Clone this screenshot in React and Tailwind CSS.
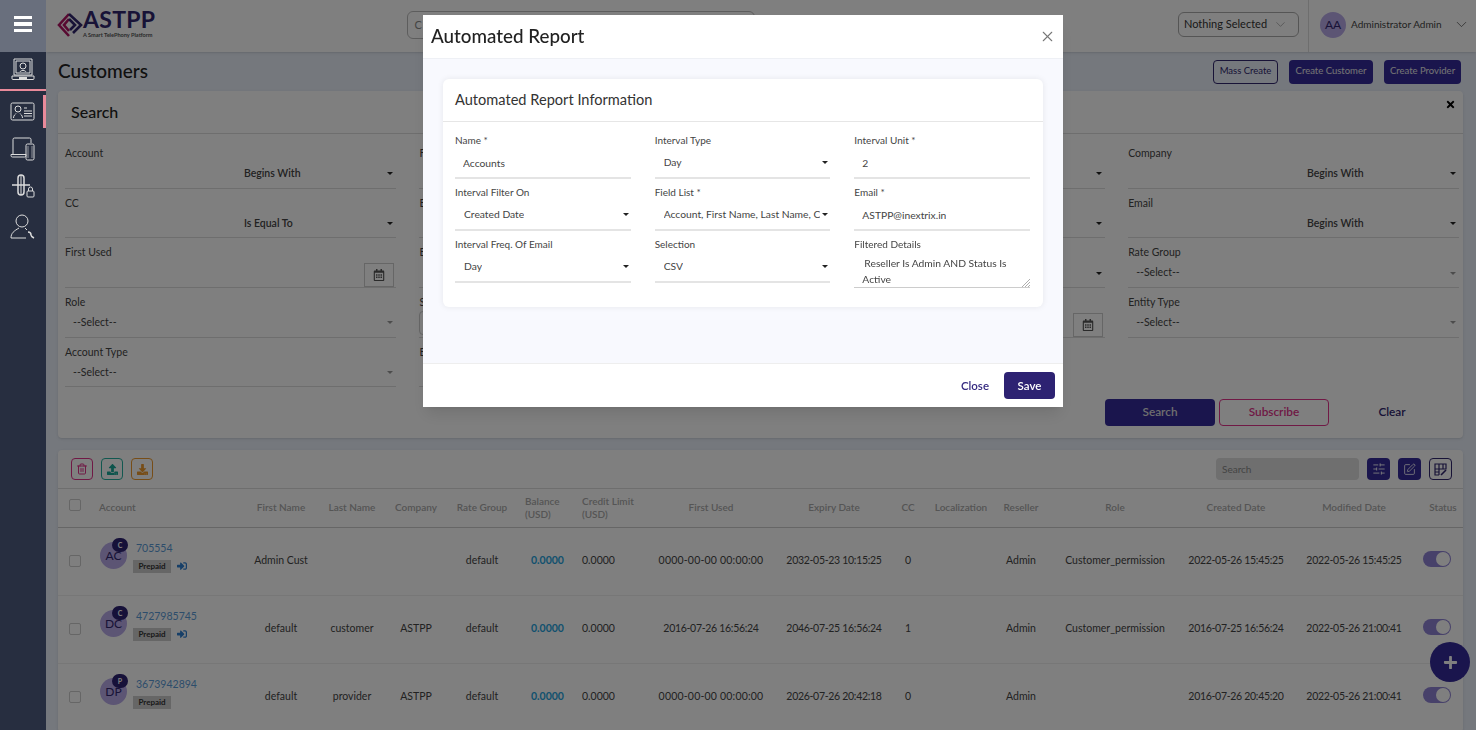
import { ChevronDown, SlidersHorizontal, SquarePen, Trash2, X } from "lucide-react";
import { FaDownload, FaPlus, FaRegCalendarAlt, FaSignInAlt, FaTimes, FaUpload } from "react-icons/fa";

const Caret = ({ light = false }) => (
  <span
    className={`ml-auto h-0 w-0 shrink-0 border-x-[3px] border-t-[3px] border-x-transparent ${
      light ? "border-t-[#999]" : "border-t-[#222]"
    }`}
  />
);

const SideIcon = ({ children }) => (
  <svg width="28" height="28" viewBox="0 0 28 28" fill="none" stroke="#dcdcdc" strokeWidth="1">
    {children}
  </svg>
);

const Sidebar = () => (
  <aside className="relative z-30 flex h-full w-[46px] shrink-0 flex-col items-center bg-[#272e40]">
    <div className="flex h-[52px] w-full flex-col items-center justify-center gap-[3px] bg-[#696f7d] pb-[4px]">
      <span className="h-[3.500px] w-[18px] bg-white" />
      <span className="h-[3.500px] w-[18px] bg-white" />
      <span className="h-[3.500px] w-[18px] bg-white" />
    </div>
    <div className="flex h-[37px] w-full items-center justify-center pb-[2px]">
      <SideIcon>
        <path d="M5 3h18v16H5z" />
        <path d="M7 5h14v12H7z" />
        <circle cx="14" cy="10" r="3" />
        <path d="M11 16c.5-2 5.500-2 6 0" />
        <path d="M3 20h22v2.500a1 1 0 0 1-1 1H4a1 1 0 0 1-1-1z" />
        <path d="M10 22h8" strokeWidth="2" />
      </SideIcon>
    </div>
    <div className="h-[2px] w-full bg-[#e98a9a]" />
    <div className="relative mt-[4px] flex h-[33px] w-full items-center justify-center">
      <SideIcon>
        <rect x="2" y="5" width="23" height="17" rx="1.500" />
        <circle cx="9" cy="11" r="3" />
        <path d="M4.500 20c0-3 2-3.500 2.500-4.500M13.500 20c0-3-2-3.500-2.500-4.500" />
        <path d="M15 10h3M15 13h8M15 15.500h8M15 18h8" />
      </SideIcon>
      <div className="absolute right-0 top-0 h-full w-[3px] bg-[#e98a9a]" />
    </div>
    <div className="mt-[3px] flex h-[36px] w-full items-center justify-center">
      <SideIcon>
        <path d="M4 19V4.500A1.500 1.500 0 0 1 5.500 3h15A1.500 1.500 0 0 1 22 4.500V8" />
        <path d="M2 19.500h15v1a1.500 1.500 0 0 1-1.500 1.500h-12A1.500 1.500 0 0 1 2 20.500z" />
        <rect x="17" y="9" width="8" height="16" rx="1.500" />
        <path d="M19 11v12M23 11v12" strokeWidth="0.600" />
      </SideIcon>
    </div>
    <div className="flex h-[37px] w-full items-center justify-center">
      <SideIcon>
        <rect x="9" y="3" width="6" height="20" rx="3" strokeWidth="1.500" />
        <path d="M3 13h18" strokeWidth="1.500" />
        <path d="M12 3v20" />
        <rect x="18" y="19" width="7" height="6" rx="1" />
        <path d="M19.500 19v-2a2 2 0 0 1 4 0v2" />
      </SideIcon>
    </div>
    <div className="mt-[2px] flex h-[41px] w-full items-center justify-center">
      <SideIcon>
        <circle cx="13" cy="8" r="6" />
        <path d="M2 25c0-5 3-7 8-10M2 25h15M16 15l2 2" />
        <path d="M19 19a3 3 0 0 1 3 3c0 1.500 2 2.500 3 3" strokeWidth="1.500" />
      </SideIcon>
    </div>
  </aside>
);

const Logo = () => (
  <div className="-mt-[1px] flex items-center">
    <svg width="26" height="26" viewBox="0 0 26 26" fill="none" strokeWidth="2.600">
      <path d="M12 2L2 13l10 11" stroke="#b01463" />
      <path d="M12 7l-5 6 5 6" stroke="#b01463" />
      <path d="M12 2l12 11-8 8" stroke="#30266e" />
      <path d="M12 7l6 6-5 5" stroke="#30266e" />
    </svg>
    <div className="-mt-[2px] flex flex-col">
      <span className="h-[20px] text-[23px] leading-[20px] font-bold tracking-[0.3px] text-[#30266e]">ASTPP</span>
      <span className="mt-[2px] h-[7px] text-[5.600px] leading-[7px] font-bold text-[#555]">A Smart TelePhony Platform</span>
    </div>
  </div>
);

const Header = () => (
  <header className="flex h-[52px] shrink-0 items-center bg-white pl-[11px] shadow-sm">
    <div className="flex h-full items-center pb-[2px]">
      <Logo />
      <div className="ml-[252px] flex h-[28px] w-[348px] items-center rounded-md border border-[#bbb] pl-[6px] text-[11px] text-[#888]">
        C
      </div>
    </div>
    <div className="ml-auto -mt-[3px] flex h-[25px] w-[121px] items-center rounded-md border border-[#aaa] pl-[5px] pr-[10px] text-[11px] text-[#333]">
      Nothing Selected
      <ChevronDown size={15} strokeWidth={1} className="ml-auto" color="#888" />
    </div>
    <div className="ml-[9px] flex h-full w-[168px] items-center border-l border-[#ddd] pb-[3px] pl-[11px]">
      <div className="flex h-[26px] w-[26px] items-center justify-center rounded-full bg-[#b8aae8] text-[12px] text-[#30266e]">
        AA
      </div>
      <span className="ml-[5px] text-[10px] text-[#444]">Administrator Admin</span>
      <ChevronDown size={17} strokeWidth={1} className="ml-auto mr-[6px]" color="#444" />
    </div>
  </header>
);

const TitleRow = () => (
  <div className="flex h-[39px] shrink-0 items-center pl-[12px] pr-[15px]">
    <h1 className="text-[19px] font-medium text-[#222]">Customers</h1>
    <div className="ml-auto flex gap-[11px] text-[9.500px]">
      <button className="h-[24px] w-[65px] rounded border border-[#30266e] text-[#30266e]">Mass Create</button>
      <button className="h-[24px] w-[84px] rounded bg-[#352a9a] text-[#e8e8e8]">Create Customer</button>
      <button className="h-[24px] w-[77px] rounded bg-[#352a9a] text-[#e8e8e8]">Create Provider</button>
    </div>
  </div>
);

const Field = ({ label, op, select, calendar, boxed }) => (
  <div className="h-[49.700px]">
    <div className="h-[14px] text-[10.500px] leading-[14px] text-[#444]">{label}</div>
    <div className="flex h-[28.500px] items-center border-b border-[#ddd] text-[10.500px] text-[#444]">
      {op && (
        <div className="ml-auto flex w-[161px] items-center pl-[9px] pr-[3px] font-semibold">
          {op}
          <Caret />
        </div>
      )}
      {select && (
        <div className="flex w-full items-center pl-[8px] pr-[3px]">
          {select}
          <Caret light />
        </div>
      )}
      {calendar && (
        <div className="ml-auto mr-[2px] flex h-[24px] w-[30px] items-center justify-center self-end border border-[#ccc] text-[#555]">
          <FaRegCalendarAlt size={12} />
        </div>
      )}
      {boxed && <div className="h-[24px] w-full rounded-sm border border-[#ccc]" />}
    </div>
  </div>
);

const searchFields = [
  { label: "Account", op: "Begins With" },
  { label: "First Name", op: "Begins With" },
  { label: "Last Name", op: "Begins With" },
  { label: "Company", op: "Begins With" },
  { label: "CC", op: "Is Equal To" },
  { label: "Balance", op: "Is Equal To" },
  { label: "Credit Limit", op: "Is Equal To" },
  { label: "Email", op: "Begins With" },
  { label: "First Used", calendar: true },
  { label: "Expiry Date", calendar: true },
  { label: "Reseller", op: "Begins With" },
  { label: "Rate Group", select: "--Select--" },
  { label: "Role", select: "--Select--" },
  { label: "Status", boxed: true },
  { label: "Created Date", calendar: true },
  { label: "Entity Type", select: "--Select--" },
  { label: "Account Type", select: "--Select--" },
  { label: "Entity", select: "--Select--" },
];

const SearchCard = () => (
  <section className="ml-[12px] mr-[13px] h-[347px] shrink-0 rounded-sm bg-white shadow-sm">
    <div className="flex h-[43px] items-center justify-between border-b border-[#ddd] pl-[13px] pr-[7px]">
      <h2 className="text-[16px] font-medium text-[#222]">Search</h2>
      <FaTimes size={11} color="#000" className="mb-[15px]" />
    </div>
    <div className="grid grid-cols-4 gap-x-[23.500px] pl-[7px] pr-[4px] pt-[12px]">
      {searchFields.map((f) => (
        <Field key={f.label} {...f} />
      ))}
    </div>
    <div className="mt-[5px] flex justify-end gap-[4px] pr-[16px] text-[11.800px] font-semibold">
      <button className="h-[27px] w-[110px] rounded bg-[#352a9a] pb-[2px] text-[#ddd]">Search</button>
      <button className="h-[27px] w-[110px] rounded border border-[#e0338a] pb-[2px] text-[#e0338a]">Subscribe</button>
      <button className="ml-[4px] h-[27px] w-[110px] pb-[2px] text-[#30266e]">Clear</button>
    </div>
  </section>
);

const ToolBtn = ({ className, children }) => (
  <button className={`flex h-[22px] w-[22px] items-center justify-center rounded-[4px] ${className}`}>{children}</button>
);

const columns = [
  { name: "", w: "w-[30px]" },
  { name: "Account", w: "w-[157px]", left: true },
  { name: "First Name", w: "w-[72px]" },
  { name: "Last Name", w: "w-[70px]" },
  { name: "Company", w: "w-[58px]" },
  { name: "Rate Group", w: "w-[74px]" },
  { name: "Balance (USD)", w: "w-[57px]", left: true },
  { name: "Credit Limit (USD)", w: "w-[71px]", left: true },
  { name: "First Used", w: "w-[128px]" },
  { name: "Expiry Date", w: "w-[118px]" },
  { name: "CC", w: "w-[30px]" },
  { name: "Localization", w: "w-[76px]" },
  { name: "Reseller", w: "w-[44px]" },
  { name: "Role", w: "w-[144px]" },
  { name: "Created Date", w: "w-[98px]" },
  { name: "Modified Date", w: "w-[138px]" },
  { name: "Status", w: "w-[40px]" },
];

const customers = [
  {
    initials: "AC", type: "C", account: "705554", login: true, first: "Admin Cust", last: "", company: "",
    firstUsed: "0000-00-00 00:00:00", expiry: "2032-05-23 10:15:25", cc: "0", role: "Customer_permission",
    created: "2022-05-26 15:45:25", modified: "2022-05-26 15:45:25",
  },
  {
    initials: "DC", type: "C", account: "4727985745", login: true, first: "default", last: "customer", company: "ASTPP",
    firstUsed: "2016-07-26 16:56:24", expiry: "2046-07-25 16:56:24", cc: "1", role: "Customer_permission",
    created: "2016-07-25 16:56:24", modified: "2022-05-26 21:00:41",
  },
  {
    initials: "DP", type: "P", account: "3673942894", login: false, first: "default", last: "provider", company: "ASTPP",
    firstUsed: "0000-00-00 00:00:00", expiry: "2026-07-26 20:42:18", cc: "0", role: "",
    created: "2016-07-26 20:45:20", modified: "2022-05-26 21:00:41",
  },
];

// zero dates are set wider than real ones in the screenshot
const DateCell = ({ children }) => (
  <td className={`whitespace-nowrap ${children.startsWith("0000") ? "tracking-[0.2px]" : "tracking-[-0.3px]"}`}>
    {children}
  </td>
);

const CustomerRow = ({ c }) => (
  <tr className="h-[68px] border-b border-[#eee] text-center text-[10.500px] text-[#444]">
    <td className="pl-[11px]">
      <div className="h-[12px] w-[12px] rounded-[2px] border border-[#ccc]" />
    </td>
    <td className="text-left">
      <div className="-mt-[11px] ml-[12px] flex items-center">
        <div className="relative flex h-[27px] w-[27px] shrink-0 items-center justify-center rounded-full bg-[#b8aae8] text-[12px] text-[#30266e]">
          {c.initials}
          <span className="absolute -right-[1px] -top-[4px] flex h-[14px] w-[16px] items-center justify-center rounded-full bg-[#2d2272] text-[7px] font-bold text-white">
            {c.type}
          </span>
        </div>
        <div className="ml-[6px] flex flex-col pt-[3px]">
          <span className="ml-[3px] text-[10.500px] leading-[13px] text-[#5a9ad6]">{c.account}</span>
          <div className="mt-[5px] flex items-center">
            <span className="flex h-[13px] w-[38px] items-center justify-center bg-[#ccc] text-[8px] font-bold text-[#333]">Prepaid</span>
            {c.login && <FaSignInAlt size={10} color="#2f7fd0" className="ml-[6px]" />}
          </div>
        </div>
      </div>
    </td>
    <td>{c.first}</td>
    <td>{c.last}</td>
    <td>{c.company}</td>
    <td>default</td>
    <td className="pl-[12px] text-left font-bold text-[#27a3dd]">0.0000</td>
    <td className="pl-[6px] text-left">0.0000</td>
    <DateCell>{c.firstUsed}</DateCell>
    <DateCell>{c.expiry}</DateCell>
    <td>{c.cc}</td>
    <td></td>
    <td>Admin</td>
    <td>{c.role}</td>
    <DateCell>{c.created}</DateCell>
    <DateCell>{c.modified}</DateCell>
    <td className="pr-[1px]">
      <div className="-mt-[4px] flex h-[16px] w-[28px] items-center justify-end rounded-full bg-[#8f82d4] pr-[1px]">
        <span className="h-[14px] w-[14px] rounded-full bg-white" />
      </div>
    </td>
  </tr>
);

const TableCard = () => (
  <section className="ml-[12px] mr-[13px] mt-[12px] shrink-0 rounded-sm bg-white shadow-sm">
    <div className="flex h-[39px] items-center border-b border-[#ddd] pl-[13px] pr-[11px]">
      <div className="flex gap-[8px]">
        <ToolBtn className="border border-[#e0338a] text-[#e0338a]"><Trash2 size={12} /></ToolBtn>
        <ToolBtn className="border border-[#25b0a0] text-[#1ba898]"><FaUpload size={11} /></ToolBtn>
        <ToolBtn className="border border-[#ee9a2e] text-[#ee9a2e]"><FaDownload size={11} /></ToolBtn>
      </div>
      <div className="ml-auto flex h-[22px] w-[143px] items-center rounded bg-[#dedede] pl-[6px] text-[10px] text-[#888]">Search</div>
      <ToolBtn className="ml-[8px] w-[23px] bg-[#352a9a] text-white"><SlidersHorizontal size={14} strokeWidth={1.5} /></ToolBtn>
      <ToolBtn className="ml-[8px] w-[23px] bg-[#352a9a] text-white"><SquarePen size={13} strokeWidth={1.5} /></ToolBtn>
      <ToolBtn className="ml-[8px] w-[23px] border border-[#30266e] text-[#30266e]">
        <svg width="15" height="15" viewBox="0 0 15 15" fill="none" stroke="currentColor" strokeWidth="1.200">
          <path d="M6 13H2V2h11v5H2M6 2v11M10 2v5M2 10h4" />
          <path d="M8 13l5-5" strokeWidth="1.600" />
        </svg>
      </ToolBtn>
    </div>
    <table className="w-[1405px] table-fixed border-collapse">
      <thead>
        <tr className="h-[38px] border-b border-[#ccc] text-[10px] text-[#aaa]">
          {columns.map((col, i) => (
            <th key={i} className={`${col.w} font-semibold leading-[13px] ${col.left ? "pl-[6px] text-left" : "text-center"}`}>
              {i === 0 && <div className="ml-[11px] -mt-[6px] h-[12px] w-[12px] rounded-[2px] border border-[#ccc]" />}
              {i === 1 ? <span className="ml-[5px]">{col.name}</span> : col.name}
            </th>
          ))}
        </tr>
      </thead>
      <tbody>
        {customers.map((c) => (
          <CustomerRow key={c.account} c={c} />
        ))}
      </tbody>
    </table>
  </section>
);

const ModalField = ({ label, value, select, indent = "pl-[8px]" }) => (
  <div className="h-[52px]">
    <div className="h-[13px] text-[10px] leading-[13px] text-[#444]">{label}</div>
    <div className={`mt-[3px] flex h-[29px] items-center border-b-2 border-[#e4e4e4] pr-[2px] text-[10.300px] text-[#444] ${indent} ${select ? "pb-[2px]" : ""}`}>
      <span className="overflow-hidden whitespace-nowrap">{value}</span>
      {select && <Caret />}
    </div>
  </div>
);

const Modal = () => (
  <div className="fixed left-[423px] top-[15px] z-40 flex h-[392px] w-[640px] flex-col bg-white shadow-lg">
    <div className="flex h-[44px] shrink-0 items-center justify-between border-b border-[#eef0f5] pl-[8px] pr-[7px]">
      <h2 className="text-[18.800px] font-medium text-[#222]">Automated Report</h2>
      <X size={17} color="#777" strokeWidth={1.5} />
    </div>
    <div className="flex-1 bg-[#f8f9fe] px-[20px] pt-[20px]">
      <div className="h-[228px] rounded-md bg-white shadow-[0_0_6px_rgba(0,0,0,0.08)]">
        <div className="flex h-[43px] items-center border-b border-[#e6e6e6] pl-[12px] text-[14.600px] text-[#333]">
          Automated Report Information
        </div>
        <div className="grid grid-cols-3 gap-x-[24px] pl-[12px] pr-[13px] pt-[12px]">
          <ModalField label="Name *" value="Accounts" />
          <ModalField label="Interval Type" value="Day" select indent="pl-[9px]" />
          <ModalField label="Interval Unit *" value="2" />
          <ModalField label="Interval Filter On" value="Created Date" select indent="pl-[9px]" />
          <ModalField label="Field List *" value="Account, First Name, Last Name, C" select indent="pl-[9px]" />
          <ModalField label="Email *" value="ASTPP@inextrix.in" />
          <ModalField label="Interval Freq. Of Email" value="Day" select indent="pl-[9px]" />
          <ModalField label="Selection" value="CSV" select indent="pl-[9px]" />
          <div className="h-[52px]">
            <div className="h-[13px] text-[10px] leading-[13px] text-[#444]">Filtered Details</div>
            <div className="relative mt-[3px] h-[34px] border-b border-[#ccc] pl-[8px] text-[10.300px] leading-[16px] text-[#444]">
              <div className="pl-[2px] pt-[1px]">Reseller Is Admin AND Status Is</div>
              <div>Active</div>
              <svg className="absolute bottom-0 right-0" width="8" height="8" viewBox="0 0 8 8" stroke="#999" strokeWidth="0.800">
                <path d="M0 8l8-8M3 8l5-5M6 8l2-2" />
              </svg>
            </div>
          </div>
        </div>
      </div>
    </div>
    <div className="flex h-[44px] shrink-0 items-center justify-end gap-[15px] border-t border-[#eee] pr-[8px] text-[11.500px] font-semibold">
      <button className="text-[#352a80]">Close</button>
      <button className="h-[27px] w-[51px] rounded bg-[#2d2272] text-white">Save</button>
    </div>
  </div>
);

const App = () => (
  <div className="flex h-screen w-full overflow-hidden bg-[#eaf0fa] font-[family-name:Lato,sans-serif]">
    <Sidebar />
    <main className="flex min-w-0 flex-1 flex-col">
      <Header />
      <TitleRow />
      <SearchCard />
      <TableCard />
    </main>
    <button className="fixed left-[1430px] top-[642px] flex h-[40px] w-[40px] items-center justify-center rounded-full bg-[#352a9a] text-white">
      <FaPlus size={15} />
    </button>
    <div className="fixed inset-0 z-20 bg-black/50" />
    <Modal />
  </div>
);

export default App;
